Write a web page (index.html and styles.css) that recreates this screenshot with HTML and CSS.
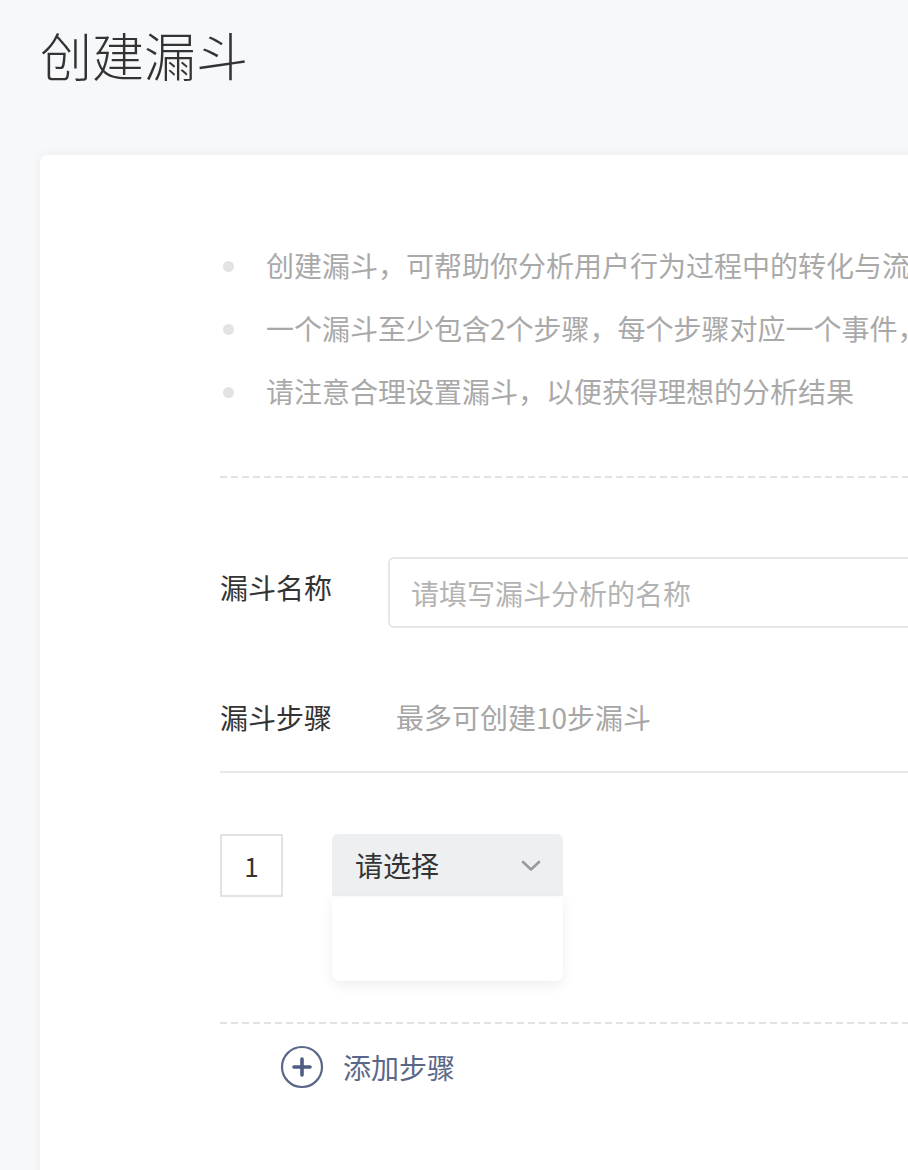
FILE: index.html
```html
<!DOCTYPE html>
<html lang="zh-CN">
<head>
<meta charset="utf-8">
<title>创建漏斗</title>
<link rel="stylesheet" href="styles.css">
</head>
<body>
<div class="page">
  <h1 class="title">创建漏斗</h1>
  <div class="card">
    <ul class="tips">
      <li>创建漏斗，可帮助你分析用户行为过程中的转化与流失情况</li>
      <li>一个漏斗至少包含2个步骤，每个步骤对应一个事件，</li>
      <li>请注意合理设置漏斗，以便获得理想的分析结果</li>
    </ul>
    <div class="dashed"></div>
    <div class="row name-row">
      <div class="label">漏斗名称</div>
      <div class="input"><span class="placeholder">请填写漏斗分析的名称</span></div>
    </div>
    <div class="row steps-row">
      <div class="label">漏斗步骤</div>
      <div class="hint">最多可创建10步漏斗</div>
    </div>
    <div class="solid"></div>
    <div class="step">
      <div class="step-no">1</div>
      <div class="select-wrap">
        <div class="select">
          <span>请选择</span>
          <svg class="chev" width="20" height="12" viewBox="0 0 20 12"><polyline points="2,2 10,9.5 18,2" fill="none" stroke="#9a9a9a" stroke-width="2.6" stroke-linecap="round" stroke-linejoin="round"/></svg>
        </div>
        <div class="menu"></div>
      </div>
    </div>
    <div class="dashed dashed-2"></div>
    <div class="add">
      <svg class="add-icon" width="44" height="44" viewBox="0 0 44 44"><circle cx="22" cy="22" r="20" fill="none" stroke="#5b6788" stroke-width="2.2"/><line x1="14" y1="22" x2="30" y2="22" stroke="#4f5d82" stroke-width="3.6" stroke-linecap="round"/><line x1="22" y1="14" x2="22" y2="30" stroke="#4f5d82" stroke-width="3.6" stroke-linecap="round"/></svg>
      <span class="add-text">添加步骤</span>
    </div>
  </div>
</div>
</body>
</html>
```
FILE: styles.css
```css
html, body {
  margin: 0;
  padding: 0;
  background: #f7f8fa;
  overflow: hidden;
  height: 1170px;
}
body {
  font-family: "Noto Sans CJK SC", "Noto Sans", "Liberation Sans", sans-serif;
  color: #333;
}
.page {
  padding: 29px 0 0 40px;
}
.title {
  margin: 0;
  font-size: 52px;
  font-weight: 300;
  line-height: 1;
  color: #333;
  height: 52px;
}
.card {
  margin-top: 74px;
  width: 1100px;
  min-height: 1100px;
  background: #fff;
  border-radius: 8px;
  box-shadow: 0 0 12px rgba(0, 0, 0, 0.05);
  padding: 79px 0 0 180px;
  box-sizing: border-box;
}
.tips {
  list-style: none;
  margin: 0;
  padding: 0;
}
.tips li {
  position: relative;
  font-size: 28px;
  line-height: 63px;
  height: 63px;
  white-space: nowrap;
  color: #a9a9a9;
  padding-left: 46px;
}
.tips li::before {
  content: "";
  position: absolute;
  left: 3px;
  top: 27px;
  width: 11px;
  height: 11px;
  border-radius: 50%;
  background: #e3e3e3;
}
.dashed {
  margin-top: 53px;
  height: 2px;
  background: repeating-linear-gradient(to right, #e2e2e2 0 7px, transparent 7px 11px);
}
.row {
  display: flex;
  align-items: flex-start;
}
.label {
  font-size: 28px;
  line-height: 60px;
  color: #333;
  white-space: nowrap;
}
.name-row {
  margin-top: 79px;
}
.name-row .label {
  width: 168px;
}
.input {
  flex: 1;
  height: 71px;
  box-sizing: border-box;
  border: 2px solid #e6e6e6;
  border-radius: 6px;
  display: flex;
  align-items: center;
  padding-left: 21px;
}
.placeholder {
  font-size: 28px;
  color: #b3b3b3;
  white-space: nowrap;
}
.steps-row {
  margin-top: 59px;
}
.hint {
  margin-left: 64px;
  font-size: 28px;
  line-height: 60px;
  color: #a6a6a6;
  white-space: nowrap;
}
.solid {
  margin-top: 24px;
  height: 2px;
  background: #e8e8e8;
}
.step {
  display: flex;
  align-items: flex-start;
  margin-top: 61px;
}
.step-no {
  width: 63px;
  height: 63px;
  box-sizing: border-box;
  border: 2px solid #e3e3e3;
  display: flex;
  align-items: center;
  justify-content: center;
  font-size: 26px;
  color: #333;
}
.select-wrap {
  position: relative;
  margin-left: 49px;
  width: 231px;
}
.select {
  height: 62px;
  background: #eeeff1;
  border-radius: 6px 6px 0 0;
  display: flex;
  align-items: center;
  justify-content: space-between;
  padding: 0 22px 0 23px;
  font-size: 28px;
  color: #333;
}
.chev {
  display: block;
  margin-top: 2px;
}
.menu {
  position: absolute;
  left: 0;
  top: 63px;
  width: 231px;
  height: 84px;
  background: #fff;
  border-radius: 0 0 8px 8px;
  box-shadow: 0 4px 14px rgba(0, 0, 0, 0.07);
}
.dashed-2 {
  margin-top: 125px;
}
.add {
  display: flex;
  align-items: center;
  margin-top: 21px;
  padding-left: 60px;
}
.add-icon {
  display: block;
}
.add-text {
  margin-left: 19px;
  font-size: 28px;
  color: #5b6788;
  white-space: nowrap;
}
```
